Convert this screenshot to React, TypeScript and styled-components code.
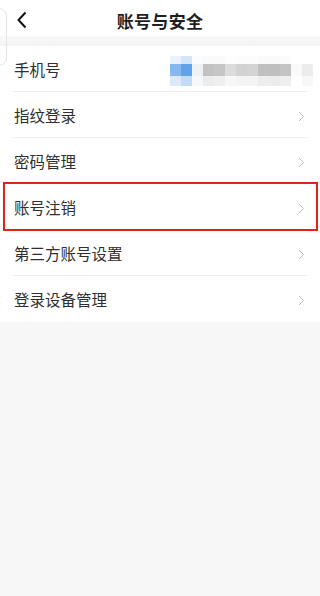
import styled, { createGlobalStyle } from 'styled-components'

const GlobalStyle = createGlobalStyle`
  html, body {
    margin: 0;
    padding: 0;
    background: #f7f7f7;
  }
  body {
    font-family: "Noto Sans CJK SC", "Noto Sans", sans-serif;
    -webkit-font-smoothing: antialiased;
  }
`

const Page = styled.div`
  position: relative;
  width: 320px;
  min-height: 596px;
  background: #f7f7f7;
  overflow: hidden;
`

const EdgeMark = styled.div`
  position: absolute;
  left: -10px;
  top: 8px;
  width: 15px;
  height: 56px;
  border: 1px solid #e4e4e4;
  border-radius: 0 8px 8px 0;
  pointer-events: none;
`

const Header = styled.header`
  height: 36px;
  background: #fff;
  display: flex;
  align-items: center;
  justify-content: center;
  position: relative;
`

const BackButton = styled.button`
  position: absolute;
  left: 12px;
  top: 9px;
  width: 20px;
  height: 22px;
  padding: 0;
  border: 0;
  background: none;
  display: flex;
  align-items: center;
  justify-content: center;
`

const Title = styled.h1`
  margin: 0;
  font-size: 17px;
  font-weight: 700;
  color: #1f1f1f;
  letter-spacing: 0.3px;
  line-height: 1;
  margin-top: 5px;
`

const Gap = styled.div`
  height: 10px;
  background: linear-gradient(#f9f9f9, #f3f3f3);
`

const List = styled.ul`
  margin: 0;
  padding: 0;
  list-style: none;
  background: #fff;
`

const Row = styled.li<{ $highlight?: boolean; $last?: boolean }>`
  position: relative;
  height: 46px;
  display: flex;
  align-items: center;
  padding: 2px 15px 0 14px;
  box-sizing: border-box;

  &::before {
    content: '';
    display: ${(p) => (p.$last ? 'none' : 'block')};
    position: absolute;
    left: 13px;
    right: 13px;
    bottom: 0;
    height: 1px;
    background: #efefef;
  }

  &::after {
    content: '';
    display: ${(p) => (p.$highlight ? 'block' : 'none')};
    position: absolute;
    left: 3px;
    right: 2px;
    top: -2px;
    bottom: -1px;
    border: 2px solid #e0241c;
    z-index: 1;
  }
`

const Label = styled.span`
  flex: 1;
  font-size: 15.5px;
  color: #2f2f2f;
  line-height: 1;
`

const Mosaic = styled.div`
  display: grid;
  grid-template-columns: repeat(13, 11px);
  grid-template-rows: 8px 12px 10px;
  margin-right: -8px;
  margin-top: 2px;
  filter: blur(0.6px);
`

const Cell = styled.div<{ $c: string }>`
  background: ${(p) => p.$c};
`

const Chevron = () => (
  <svg width="7" height="11" viewBox="0 0 7 11" fill="none">
    <path d="M1 1l4.5 4.5L1 10" stroke="#bbbbbb" strokeWidth="1" />
  </svg>
)

const mosaicCols = [
  ['#eaf2fb', '#86b9ef', '#dde9f8'],
  ['#d4e5f8', '#62a2ea', '#c4dbf5'],
  ['#fbfcfd', '#eef2f5', '#f6f8fa'],
  ['#fafafa', '#c2c2c2', '#ececec'],
  ['#fafafa', '#c6c6c6', '#efefef'],
  ['#fdfdfd', '#dcdcdc', '#f7f7f7'],
  ['#fcfcfc', '#d2d2d2', '#f4f4f4'],
  ['#fcfcfc', '#d4d4d4', '#f4f4f4'],
  ['#fafafa', '#c0c0c0', '#ededed'],
  ['#fafafa', '#bfbfbf', '#ececec'],
  ['#fbfbfb', '#c4c4c4', '#efefef'],
  ['#ffffff', '#fafafa', '#ffffff'],
  ['#ffffff', '#ececec', '#f8f8f8'],
]

const items = [
  { label: '指纹登录' },
  { label: '密码管理' },
  { label: '账号注销', highlight: true },
  { label: '第三方账号设置' },
  { label: '登录设备管理' },
]

export default function App() {
  const cells: string[] = []
  for (let r = 0; r < 3; r++) {
    for (let c = 0; c < mosaicCols.length; c++) cells.push(mosaicCols[c][r])
  }

  return (
    <Page>
      <GlobalStyle />
      <Header>
        <BackButton aria-label="返回">
          <svg width="12" height="18" viewBox="0 0 12 18" fill="none">
            <path d="M9.5 1.5L2.5 9l7 7.5" stroke="#111" strokeWidth="2" />
          </svg>
        </BackButton>
        <Title>账号与安全</Title>
      </Header>
      <Gap />
      <List>
        <Row>
          <Label>手机号</Label>
          <Mosaic>
            {cells.map((c, i) => (
              <Cell key={i} $c={c} />
            ))}
          </Mosaic>
        </Row>
        {items.map((it, i) => (
          <Row key={it.label} $highlight={it.highlight} $last={i === items.length - 1}>
            <Label>{it.label}</Label>
            <Chevron />
          </Row>
        ))}
      </List>
      <EdgeMark />
    </Page>
  )
}
